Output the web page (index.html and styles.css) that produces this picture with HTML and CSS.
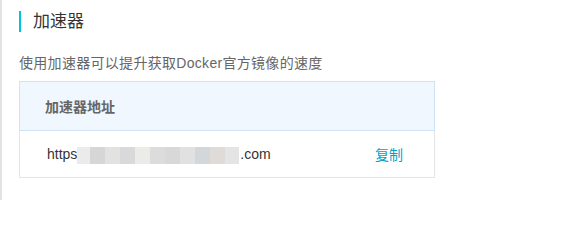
FILE: index.html
```html
<!DOCTYPE html>
<html>
<head>
<meta charset="utf-8">
<link rel="stylesheet" href="styles.css">
</head>
<body>
<div class="page">
  <h2 class="title">加速器</h2>
  <p class="desc">使用加速器可以提升获取Docker官方镜像的速度</p>
  <div class="box">
    <div class="box-head">加速器地址</div>
    <div class="box-row">
      <span class="url">https<span class="mask"><i class="m1"></i><i class="m2"></i><i class="m3"></i><i class="m4"></i><i class="m5"></i><i class="m6"></i><i class="m7"></i><i class="m8"></i><i class="m9"></i><i class="m10"></i><i class="m11"></i></span>.com</span>
      <a class="copy">复制</a>
    </div>
  </div>
</div>
</body>
</html>
```
FILE: styles.css
```css
html, body {
  margin: 0;
  padding: 0;
  background: #fff;
}
body {
  font-family: "Liberation Sans", "Noto Sans CJK SC", sans-serif;
  color: #333;
}
.page {
  border-left: 2px solid #e2e2e2;
  height: 200px;
  box-sizing: border-box;
  padding: 11px 0 0 17px;
}
.title {
  margin: 0;
  border-left: 2px solid #00c1de;
  height: 21px;
  line-height: 21px;
  padding-left: 12px;
  font-size: 17px;
  font-weight: normal;
  color: #333;
}
.desc {
  margin: 21px 0 0 0;
  font-size: 14px;
  line-height: 20px;
  letter-spacing: 0.3px;
  color: #666;
}
.box {
  margin-top: 8px;
  width: 416px;
  box-sizing: border-box;
  border: 1px solid #e5e5e5;
}
.box-head {
  margin: -1px -1px 0 -1px;
  background: #f0f7ff;
  border: 1px solid #cde4f8;
  height: 50px;
  box-sizing: border-box;
  display: flex;
  align-items: center;
  padding-left: 25px;
  font-size: 14px;
  font-weight: bold;
  color: #666;
}
.box-row {
  height: 46px;
  display: flex;
  align-items: center;
  justify-content: space-between;
  padding: 0 31px 0 27px;
  font-size: 14px;
}
.url {
  display: flex;
  align-items: center;
  color: #333;
}
.mask {
  display: flex;
  height: 17px;
  margin: 3px 1px 0 0;
}
.mask i {
  width: 15px;
  height: 17px;
}
.m1 { background: #ebebeb; width: 13px !important; }
.m2 { background: #d6d6d6; }
.m3 { background: #e2e2e1; }
.m4 { background: #d9d9db; }
.m5 { background: #ebebe8; }
.m6 { background: #dcdcdc; }
.m7 { background: #d8d8d8; }
.m8 { background: #e1e1e1; }
.m9 { background: #d4d7d9; }
.m10 { background: #dedbd8; }
.m11 { background: #e4e4e4; width: 14px !important; }
.copy {
  color: #00a2ca;
  cursor: pointer;
}
```
